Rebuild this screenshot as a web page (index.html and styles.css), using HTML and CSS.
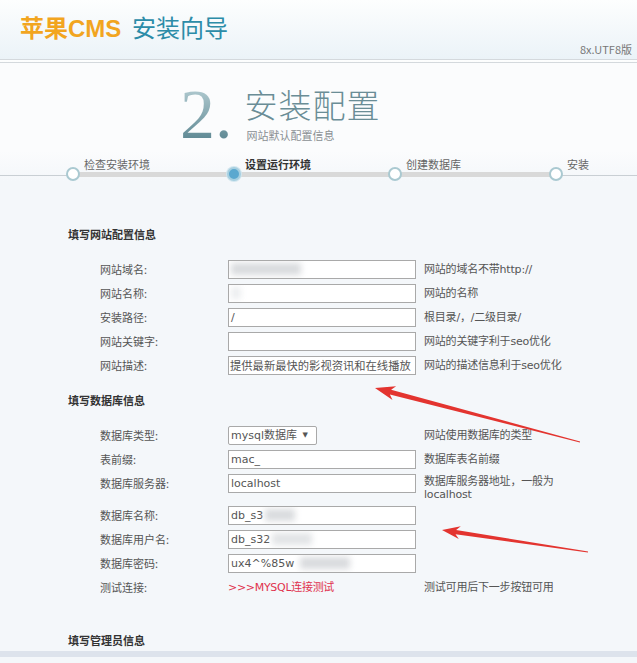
FILE: index.html
```html
<!DOCTYPE html>
<html lang="zh-CN">
<head>
    <meta charset="UTF-8">
    <title>苹果CMS 安装向导</title>
    <link rel="stylesheet" href="styles.css">
</head>
<body>
    <div class="header">
        <h1 class="logo"><span class="brand">苹果CMS</span> <span class="wizard">安装向导</span></h1>
        <span class="version">8x.UTF8版</span>
    </div>

    <div class="hero">
        <div class="step-no">2.</div>
        <div class="step-title">
            <h2>安装配置</h2>
            <p>网站默认配置信息</p>
        </div>
    </div>

    <div class="steps">
        <div class="step"><i class="dot"></i><span>检查安装环境</span></div>
        <div class="step active"><i class="dot"></i><span>设置运行环境</span></div>
        <div class="step"><i class="dot"></i><span>创建数据库</span></div>
        <div class="step"><i class="dot"></i><span>安装</span></div>
    </div>

    <div class="main">
        <h3 class="sec-title">填写网站配置信息</h3>
        <div class="form">
            <label>网站域名:</label>
            <div class="field"><span class="smudge s1"></span></div>
            <span class="hint">网站的域名不带http://</span>

            <label>网站名称:</label>
            <div class="field"><span class="smudge s2"></span></div>
            <span class="hint">网站的名称</span>

            <label>安装路径:</label>
            <div class="field">/</div>
            <span class="hint">根目录/，/二级目录/</span>

            <label>网站关键字:</label>
            <div class="field"></div>
            <span class="hint">网站的关键字利于seo优化</span>

            <label>网站描述:</label>
            <div class="field cjk">提供最新最快的影视资讯和在线播放</div>
            <span class="hint">网站的描述信息利于seo优化</span>
        </div>

        <h3 class="sec-title db">填写数据库信息</h3>
        <div class="form">
            <label>数据库类型:</label>
            <div class="field select">mysql数据库 <b>▼</b></div>
            <span class="hint">网站使用数据库的类型</span>

            <label>表前缀:</label>
            <div class="field">mac_</div>
            <span class="hint">数据库表名前缀</span>

            <label>数据库服务器:</label>
            <div class="field">localhost</div>
            <span class="hint two">数据库服务器地址，一般为<br>localhost</span>

            <label>数据库名称:</label>
            <div class="field">db_s3<span class="smudge s3"></span></div>
            <span class="hint"></span>

            <label>数据库用户名:</label>
            <div class="field">db_s32<span class="smudge s4"></span></div>
            <span class="hint"></span>

            <label>数据库密码:</label>
            <div class="field">ux4^%85w<span class="smudge s5"></span></div>
            <span class="hint"></span>

            <label>测试连接:</label>
            <a class="test-link">&gt;&gt;&gt;MYSQL连接测试</a>
            <span class="hint">测试可用后下一步按钮可用</span>
        </div>

        <h3 class="sec-title admin">填写管理员信息</h3>
    </div>
    <div class="footer-band"></div>

    <!-- annotation arrows drawn over the screenshot -->
    <svg class="arrows" width="637" height="663" viewBox="0 0 637 663">
        <polygon fill="#e3342f" points="375,388 396.1,386.3 391.1,389.7 580.1,441.5 579.9,442.5 389.9,394.5 392.5,399.9"/>
        <polygon fill="#e3342f" points="442,530 460.8,526.3 456.1,529.9 588.1,551.5 587.9,552.5 455.5,534.3 458.8,539.1"/>
    </svg>
</body>
</html>
```

FILE: styles.css
```css
* {
    box-sizing: border-box;
}

body {
    margin: 0;
    width: 637px;
    height: 663px;
    overflow: hidden;
    position: relative;
    font-family: "Noto Sans CJK SC", "DejaVu Sans", sans-serif;
    font-size: 11px;
    color: #555;
    background: #f4f7fa;
}

.header {
    height: 63px;
    display: flex;
    justify-content: space-between;
    align-items: flex-start;
    padding: 0 5px 0 20px;
    background: linear-gradient(#fdfefe, #ebf3f8);
    border-bottom: 4px double #d4d9dd;
}

.logo {
    margin: 14px 0 0;
    font-size: 24px;
    font-weight: normal;
    line-height: 30px;
    font-family: "Liberation Sans", "Noto Sans CJK SC", sans-serif;
}

.brand {
    color: #f2a51f;
    font-weight: bold;
}

.wizard {
    color: #2c8ca8;
    margin-left: 4px;
}

.version {
    margin-top: 41px;
    font-size: 11px;
    color: #777;
}

.hero {
    display: flex;
    align-items: flex-start;
    padding: 24px 0 0 180px;
    height: 88px;
    background: #fbfcfd;
}

.step-no {
    font-family: "Liberation Serif", serif;
    font-size: 70px;
    line-height: 56px;
    color: #7fa3ad;
    background: linear-gradient(#b2cbd1, #5a8590);
    -webkit-background-clip: text;
    background-clip: text;
    -webkit-text-fill-color: transparent;
}

.step-title {
    margin-left: 12px;
}

.step-title h2 {
    margin: -5px 0 0;
    font-size: 33px;
    font-weight: 300;
    line-height: 44px;
    color: #6a8d96;
    letter-spacing: 1px;
}

.step-title p {
    margin: 3px 0 0 2px;
    font-size: 11px;
    line-height: 12px;
    color: #8a8f93;
}

.steps {
    display: flex;
    height: 30px;
    padding-left: 66px;
    background:
        linear-gradient(#d9d9d9, #d9d9d9) no-repeat 73px 21px / 483px 5px,
        linear-gradient(#c9cfd4, #c9cfd4) no-repeat 0 24px / 100% 1px,
        linear-gradient(#fbfcfd, #f4f7fa);
}

.step {
    flex: none;
    width: 161px;
    display: flex;
    align-items: flex-start;
}

.step:last-child {
    width: auto;
}

.step .dot {
    flex: none;
    width: 14px;
    height: 14px;
    margin-top: 16px;
    border-radius: 50%;
    border: 2px solid #aac9d1;
    background: #fff;
}

.step span {
    margin: 0 0 0 4px;
    line-height: 14px;
    padding-top: 6px;
    color: #666;
}

.step.active .dot {
    background: #5aa8cf;
    border-color: #a6cfe0;
    box-shadow: 0 0 0 1px #d2e6ef;
}

.step.active span {
    font-weight: bold;
    color: #333;
}

.main {
    padding: 46px 0 0 68px;
    height: 470px;
}

.sec-title {
    margin: 0 0 19px;
    font-size: 11px;
    line-height: 14px;
    font-weight: bold;
    color: #333;
}

.sec-title.db {
    margin-top: 18px;
}

.sec-title.admin {
    margin-top: 36px;
}

.form {
    display: grid;
    grid-template-columns: 120px 188px auto;
    column-gap: 8px;
    row-gap: 5px;
    padding-left: 32px;
    align-items: start;
}

.form label {
    line-height: 19px;
    color: #555;
}

.field {
    position: relative;
    height: 19px;
    border: 1px solid #a9a9a9;
    background: #fff;
    padding: 0 2px;
    font-family: "DejaVu Sans", "Noto Sans CJK SC", sans-serif;
    font-size: 11px;
    line-height: 17px;
    color: #555;
    white-space: nowrap;
    overflow: hidden;
}

.field.cjk {
    font-family: "Noto Sans CJK SC", sans-serif;
    font-size: 11.3px;
    padding: 0 1px;
}

.field.select {
    width: 89px;
    border-radius: 2px;
}

.field.select b {
    font-size: 7px;
    font-weight: normal;
    vertical-align: 2px;
    margin-left: 2px;
}

.hint {
    line-height: 19px;
    color: #555;
    font-family: "DejaVu Sans", "Noto Sans CJK SC", sans-serif;
    font-size: 11px;
    letter-spacing: -0.2px;
}

.hint.two {
    line-height: 13px;
    padding-top: 1px;
}

.test-link {
    line-height: 19px;
    color: #e0324e;
    font-family: "DejaVu Sans", "Noto Sans CJK SC", sans-serif;
    font-size: 11px;
    letter-spacing: -0.3px;
}

.smudge {
    display: inline-block;
    vertical-align: top;
    height: 12px;
    margin-top: 2px;
    background: #d9dbde;
    filter: blur(3px);
}

.s1 { width: 70px; }
.s2 { width: 10px; background: #eceef0; }
.s3 { width: 30px; margin-left: 2px; }
.s4 { width: 40px; margin-left: 2px; background: #e2e4e6; }
.s5 { width: 50px; margin-left: 6px; }

.footer-band {
    height: 6px;
    background: #dde3ec;
}

.arrows {
    position: absolute;
    left: 0;
    top: 0;
    pointer-events: none;
}
```
